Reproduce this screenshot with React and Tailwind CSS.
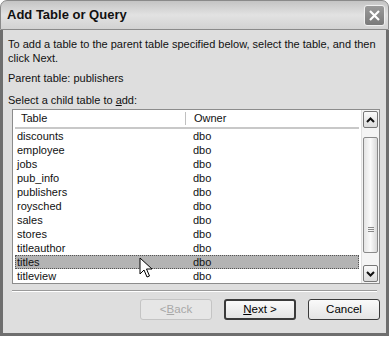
import React from 'react';

const rows = [
  'discounts',
  'employee',
  'jobs',
  'pub_info',
  'publishers',
  'roysched',
  'sales',
  'stores',
  'titleauthor',
  'titles',
  'titleview',
];

const Cursor = () => (
  <svg className="absolute left-[139px] top-[257px]" width="14" height="22" viewBox="0 0 14 22">
    <path d="M1 1 L1 17 L5 13 L8 20 L10.5 19 L7.5 12 L13 12 Z" fill="#fff" stroke="#000" strokeWidth="1" strokeLinejoin="miter" />
  </svg>
);

const Chevron = ({ up }) => (
  <svg width="9" height="6" viewBox="0 0 9 6">
    <path d={up ? 'M1 5 L4.5 1.5 L8 5' : 'M1 1 L4.5 4.5 L8 1'} fill="none" stroke="#111" strokeWidth="2" />
  </svg>
);

const Button = ({ children, disabled, strong }) => (
  <div
    className={`w-[72px] h-[21px] rounded-[3px] flex items-center justify-center text-[11.5px] ${
      disabled
        ? 'border border-[#c4c4c4] text-[#a8a8a8] bg-[#e6e6e6]'
        : strong
        ? 'border-2 border-[#3a3a3a] text-black bg-gradient-to-b from-[#fafafa] to-[#e4e4e4]'
        : 'border border-[#3a3a3a] text-black bg-gradient-to-b from-[#fafafa] to-[#e4e4e4]'
    }`}
  >
    {children}
  </div>
);

export default function App() {
  return (
    <div className="relative w-[391px] h-[338px] bg-white overflow-hidden" style={{ fontFamily: '"Liberation Sans", Arial, sans-serif' }}>
      <div className="flex flex-col w-[389px] h-[336px]">
        {/* Title bar */}
        <div className="h-[30px] shrink-0 rounded-t-[7px] border border-[#8a8a8a] bg-gradient-to-b from-[#c4c4c4] via-[#e2e2e2] to-[#d2d2d2] flex items-center justify-between pl-[6px] pr-[3px]">
          <span className="text-[13px] font-bold text-[#111]">Add Table or Query</span>
          <div className="w-[21px] h-[21px] rounded-[3px] border border-[#f0f0f0] bg-gradient-to-b from-[#9a9a9a] to-[#7a7a7a] flex items-center justify-center">
            <svg width="13" height="13" viewBox="0 0 13 13">
              <path d="M2 2 L11 11 M11 2 L2 11" stroke="#fff" strokeWidth="2.2" />
            </svg>
          </div>
        </div>

        {/* Body */}
        <div className="flex-1 flex flex-col border-x-[3px] border-b-[3px] border-[#6e6e6e] bg-[#dedede] px-[5px] text-[11px] text-[#111]">
          <p className="mt-[7px] leading-[14px]">
            To add a table to the parent table specified below, select the table, and then click Next.
          </p>
          <p className="mt-[6px] leading-[14px]">Parent table: publishers</p>
          <p className="mt-[8px] leading-[14px]">
            Select a child table to <span className="underline">a</span>dd:
          </p>

          {/* List */}
          <div className="mt-[2px] ml-[4px] mr-[1px] h-[175px] border border-[#8c8c8c] bg-white flex">
            <div className="flex-1 flex flex-col px-[2px]">
              <div className="h-[19px] flex items-center border-b-2 border-[#c8c8c8]">
                <div className="w-[171px] pl-[6px] border-r border-[#c0c0c0] h-[13px] flex items-center">Table</div>
                <div className="pl-[8px]">Owner</div>
              </div>
              {rows.map((r) => (
                <div
                  key={r}
                  className={`h-[14px] flex items-center ${
                    r === 'titles' ? 'bg-[#b3b3b3] outline outline-1 outline-dotted outline-[#555] -outline-offset-1' : ''
                  }`}
                >
                  <div className="w-[172px] pl-[2px]">{r}</div>
                  <div className="pl-[6px]">dbo</div>
                </div>
              ))}
            </div>
            {/* Scrollbar */}
            <div className="w-[18px] flex flex-col bg-[#f4f4f4] border-l border-[#e0e0e0]">
              <div className="h-[17px] mx-[1px] mt-[1px] border border-[#777] rounded-[2px] bg-gradient-to-b from-[#fafafa] to-[#dcdcdc] flex items-center justify-center">
                <Chevron up />
              </div>
              <div className="h-[116px] mt-[9px] mx-[1px] border border-[#8a8a8a] rounded-[2px] bg-gradient-to-r from-[#e4e4e4] via-[#fafafa] to-[#d8d8d8] flex items-center justify-center">
                <div className="flex flex-col gap-[1px] translate-y-[34px]">
                  <div className="w-[6px] h-px bg-[#888]" />
                  <div className="w-[6px] h-px bg-[#888]" />
                  <div className="w-[6px] h-px bg-[#888]" />
                </div>
              </div>
              <div className="flex-1" />
              <div className="h-[17px] mx-[1px] mb-[1px] border border-[#777] rounded-[2px] bg-gradient-to-b from-[#fafafa] to-[#dcdcdc] flex items-center justify-center">
                <Chevron />
              </div>
            </div>
          </div>

          <div className="mt-[6px] h-[2px] border-t border-[#9a9a9a] border-b border-b-white mx-[4px]" />

          <div className="mt-[7px] flex justify-end gap-[12px] pr-[1px]">
            <Button disabled>&lt; <span className="underline">B</span>ack</Button>
            <Button strong><span className="underline">N</span>ext &gt;</Button>
            <Button>Cancel</Button>
          </div>
        </div>
      </div>
      <Cursor />
    </div>
  );
}
